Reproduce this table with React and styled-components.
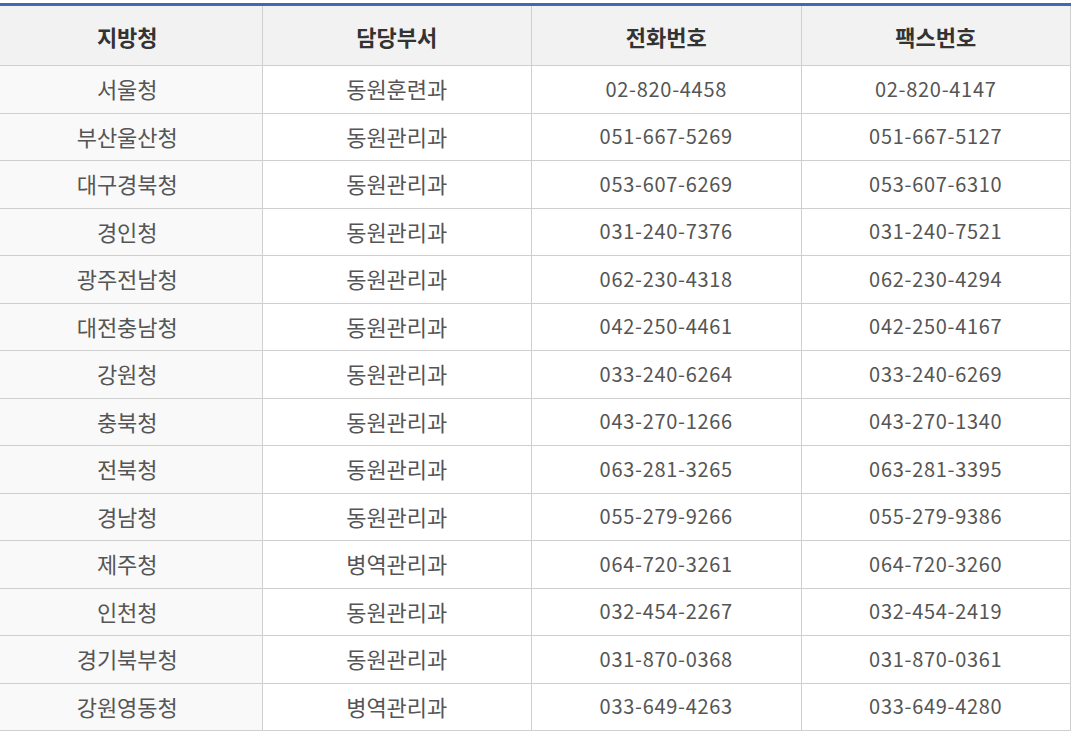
import React from 'react';
import styled, {createGlobalStyle} from 'styled-components';

const rows = [
  ["서울청", "동원훈련과", "02-820-4458", "02-820-4147"],
  ["부산울산청", "동원관리과", "051-667-5269", "051-667-5127"],
  ["대구경북청", "동원관리과", "053-607-6269", "053-607-6310"],
  ["경인청", "동원관리과", "031-240-7376", "031-240-7521"],
  ["광주전남청", "동원관리과", "062-230-4318", "062-230-4294"],
  ["대전충남청", "동원관리과", "042-250-4461", "042-250-4167"],
  ["강원청", "동원관리과", "033-240-6264", "033-240-6269"],
  ["충북청", "동원관리과", "043-270-1266", "043-270-1340"],
  ["전북청", "동원관리과", "063-281-3265", "063-281-3395"],
  ["경남청", "동원관리과", "055-279-9266", "055-279-9386"],
  ["제주청", "병역관리과", "064-720-3261", "064-720-3260"],
  ["인천청", "동원관리과", "032-454-2267", "032-454-2419"],
  ["경기북부청", "동원관리과", "031-870-0368", "031-870-0361"],
  ["강원영동청", "병역관리과", "033-649-4263", "033-649-4280"],
];

const GlobalStyle = createGlobalStyle`
  body {
    margin: 0;
    background: #fff;
    font-family: "Noto Sans CJK KR", "Noto Sans", sans-serif;
    overflow: hidden;
  }
`;

const Table = styled.table`
  border-collapse: collapse;
  table-layout: fixed;
  width: 1079px;
  margin: 3px 0 0 -8px;
  border-top: 3px solid #4168b3;
`;

const HeadCell = styled.th`
  height: 59px;
  padding: 0;
  background: #f2f2f2;
  color: #333;
  font-size: 22px;
  font-weight: 700;
  text-align: center;
  border: 1px solid #cfcfcf;
  border-top: none;
`;

const Row = styled.tr`
  height: 47.5px;
`;

const Cell = styled.td`
  padding: 0 0 2px;
  background: ${props => props.first ? "#f9f9f9" : "#fff"};
  color: #555;
  font-size: ${props => props.num ? "20px" : "22px"};
  text-align: center;
  border: 1px solid #cfcfcf;
  letter-spacing: ${props => props.num ? "0.7px" : "0"};
`;

const App = () => {
  return (
    <>
      <GlobalStyle />
      <Table>
        <thead>
          <tr>
            <HeadCell>지방청</HeadCell>
            <HeadCell>담당부서</HeadCell>
            <HeadCell>전화번호</HeadCell>
            <HeadCell>팩스번호</HeadCell>
          </tr>
        </thead>
        <tbody>
          {rows.map((r, i) => (
            <Row key={i}>
              <Cell first>{r[0]}</Cell>
              <Cell>{r[1]}</Cell>
              <Cell num>{r[2]}</Cell>
              <Cell num>{r[3]}</Cell>
            </Row>
          ))}
        </tbody>
      </Table>
    </>
  );
};

export default App;
